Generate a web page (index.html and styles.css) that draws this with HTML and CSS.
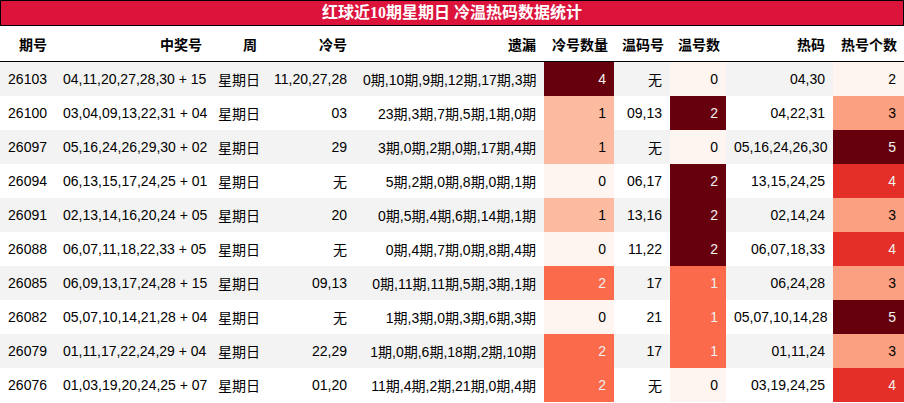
FILE: index.html
```html
<!DOCTYPE html>
<html lang="zh">
<head>
<meta charset="utf-8">
<link rel="stylesheet" href="styles.css">
</head>
<body>
<div class="title">红球近10期星期日 冷温热码数据统计</div>
<table class="stats">
<colgroup>
<col class="c1"><col class="c2"><col class="c3"><col class="c4"><col class="c5"><col class="c6"><col class="c7"><col class="c8"><col class="c9"><col class="c10">
</colgroup>
<thead>
<tr><th>期号</th><th>中奖号</th><th>周</th><th>冷号</th><th>遗漏</th><th>冷号数量</th><th>温码号</th><th>温号数</th><th>热码</th><th>热号个数</th></tr>
</thead>
<tbody>
<tr><td>26103</td><td>04,11,20,27,28,30 + 15</td><td>星期日</td><td>11,20,27,28</td><td>0期,10期,9期,12期,17期,3期</td><td class="r4 lt">4</td><td>无</td><td class="r0">0</td><td>04,30</td><td class="r0">2</td></tr>
<tr><td>26100</td><td>03,04,09,13,22,31 + 04</td><td>星期日</td><td>03</td><td>23期,3期,7期,5期,1期,0期</td><td class="r1">1</td><td>09,13</td><td class="r4 lt">2</td><td>04,22,31</td><td class="r3">3</td></tr>
<tr><td>26097</td><td>05,16,24,26,29,30 + 02</td><td>星期日</td><td>29</td><td>3期,0期,2期,0期,17期,4期</td><td class="r1">1</td><td>无</td><td class="r0">0</td><td>05,16,24,26,30</td><td class="r4 lt">5</td></tr>
<tr><td>26094</td><td>06,13,15,17,24,25 + 01</td><td>星期日</td><td>无</td><td>5期,2期,0期,8期,0期,1期</td><td class="r0">0</td><td>06,17</td><td class="r4 lt">2</td><td>13,15,24,25</td><td class="rh4 lt">4</td></tr>
<tr><td>26091</td><td>02,13,14,16,20,24 + 05</td><td>星期日</td><td>20</td><td>0期,5期,4期,6期,14期,1期</td><td class="r1">1</td><td>13,16</td><td class="r4 lt">2</td><td>02,14,24</td><td class="r3">3</td></tr>
<tr><td>26088</td><td>06,07,11,18,22,33 + 05</td><td>星期日</td><td>无</td><td>0期,4期,7期,0期,8期,4期</td><td class="r0">0</td><td>11,22</td><td class="r4 lt">2</td><td>06,07,18,33</td><td class="rh4 lt">4</td></tr>
<tr><td>26085</td><td>06,09,13,17,24,28 + 15</td><td>星期日</td><td>09,13</td><td>0期,11期,11期,5期,3期,1期</td><td class="r2 lt">2</td><td>17</td><td class="r2 lt">1</td><td>06,24,28</td><td class="r3">3</td></tr>
<tr><td>26082</td><td>05,07,10,14,21,28 + 04</td><td>星期日</td><td>无</td><td>1期,3期,0期,3期,6期,3期</td><td class="r0">0</td><td>21</td><td class="r2 lt">1</td><td>05,07,10,14,28</td><td class="r4 lt">5</td></tr>
<tr><td>26079</td><td>01,11,17,22,24,29 + 04</td><td>星期日</td><td>22,29</td><td>1期,0期,6期,18期,2期,10期</td><td class="r2 lt">2</td><td>17</td><td class="r2 lt">1</td><td>01,11,24</td><td class="r3">3</td></tr>
<tr><td>26076</td><td>01,03,19,20,24,25 + 07</td><td>星期日</td><td>01,20</td><td>11期,4期,2期,21期,0期,4期</td><td class="r2 lt">2</td><td>无</td><td class="r0">0</td><td>03,19,24,25</td><td class="rh4 lt">4</td></tr>
</tbody>
</table>
</body>
</html>
```
FILE: styles.css
```css
html, body {
  margin: 0;
  padding: 0;
  background: #ffffff;
}
body {
  width: 904px;
  font-family: "Liberation Sans", "Noto Sans CJK SC", sans-serif;
  font-size: 14px;
  color: #000;
}
.title {
  box-sizing: border-box;
  height: 26px;
  line-height: 24px;
  background: #dc143c;
  color: #fff;
  font-family: "Liberation Serif", "Noto Sans CJK SC", serif;
  font-weight: bold;
  font-size: 16px;
  text-align: center;
  border: 1px solid #000;
}
.stats {
  width: 904px;
  border-collapse: collapse;
  table-layout: fixed;
}
.c1 { width: 55px; }
.c2 { width: 155px; }
.c3 { width: 55px; }
.c4 { width: 90px; }
.c5 { width: 189px; }
.c6 { width: 70px; }
.c7 { width: 56px; }
.c8 { width: 56px; }
.c9 { width: 107px; }
.c10 { width: 71px; }
.stats th {
  height: 35px;
  padding: 0 8px;
  text-align: right;
  font-weight: bold;
  border-bottom: 1px solid #000;
  white-space: nowrap;
}
.stats td {
  height: 34px;
  padding: 0 8px;
  text-align: right;
  white-space: nowrap;
}
.stats tbody tr:nth-child(odd) td {
  background: #f3f3f3;
}
.stats tbody tr:nth-child(even) td {
  background: #ffffff;
}
.stats tbody tr td.r0 { background: #fff5f0; }
.stats tbody tr td.r1 { background: #fcbba1; }
.stats tbody tr td.r2 { background: #fb6a4a; }
.stats tbody tr td.r3 { background: #fca082; }
.stats tbody tr td.rh4 { background: #e32f27; }
.stats tbody tr td.r4 { background: #67000d; }
.stats tbody tr td.lt { color: #f1f1f1; }
```
